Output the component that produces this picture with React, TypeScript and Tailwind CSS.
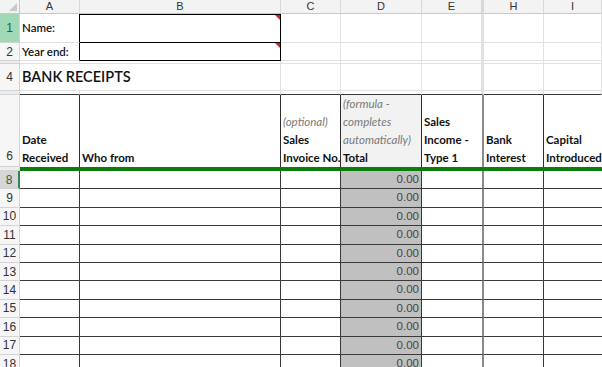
import React from 'react';

// Bank receipts worksheet: Excel-style grid with frozen header and row numbers
const COLS = ['A', 'B', 'C', 'D', 'E', 'H', 'I'];
const DATA_ROWS = [8, 9, 10, 11, 12, 13, 14, 15, 16, 17, 18];

const cellFont = "font-['Lato','Noto_Sans',sans-serif]";
const numFont = "font-['Liberation_Sans',Arial,sans-serif]";

function RowHead({ n, className = '' }: { n?: number | string; className?: string }) {
  return (
    <div
      className={`flex items-center justify-center border-r border-b border-[#d4d4d4] bg-[#f6f6f6] text-[12px] text-[#333] ${numFont} ${className}`}
    >
      {n}
    </div>
  );
}

function Grey({ className = '', children }: { className?: string; children?: React.ReactNode }) {
  return <div className={`relative border-r border-b border-[#e1e1e1] bg-white ${className}`}>{children}</div>;
}

function Comment() {
  return (
    <span className="absolute top-0 right-0 h-0 w-0 border-t-[5px] border-l-[5px] border-t-[#e0201b] border-l-transparent" />
  );
}

function HeadCell({ children, className = '' }: { children?: React.ReactNode; className?: string }) {
  return (
    <div
      className={`flex flex-col justify-end border-r border-[#2f2f2f] pl-[2px] text-[11.5px] font-bold leading-[18px] text-[#111] ${cellFont} ${className}`}
    >
      {children}
    </div>
  );
}

function Note({ children }: { children: React.ReactNode }) {
  return <span className="font-normal italic text-[#7a7a7a]">{children}</span>;
}

export default function App() {
  return (
    <div className="h-[367px] w-[602px] overflow-hidden bg-white">
      <div className="grid grid-cols-[20px_60px_201px_60px_81px_62px_60px_58px] grid-rows-[14px_29px_18px_3px_27px_4px_72px_4px_repeat(11,18.4px)]">
        {/* column letters */}
        <div className="relative border-r border-b border-[#c8c8c8] bg-[#f3f3f3]">
          <span className="absolute right-[2px] bottom-[2px] h-0 w-0 border-b-[8px] border-l-[8px] border-b-[#c9c9c9] border-l-transparent" />
        </div>
        {COLS.map((c) => (
          <div
            key={c}
            className={`flex items-center justify-center border-b border-[#c8c8c8] bg-[#f3f3f3] text-[11px] text-[#333] ${numFont} ${
              c === 'E' ? 'border-r-[3px] border-r-[#d8d8d8]' : 'border-r border-r-[#d8d8d8]'
            }`}
          >
            {c}
          </div>
        ))}

        {/* row 1 */}
        <RowHead n={1} className="!bg-[#a0d8b8] !text-[#0e6b3a]" />
        <Grey className={`flex items-center pl-[2px] text-[11.5px] font-semibold text-[#111] !border-r-black ${cellFont}`}>Name:</Grey>
        <Grey className="!border-b-black border-t border-t-black !border-r-black">
          <Comment />
        </Grey>
        <Grey />
        <Grey />
        <Grey className="!border-r-[3px]" />
        <Grey />
        <Grey />

        {/* row 2 */}
        <RowHead n={2} />
        <Grey className={`flex items-center pl-[2px] text-[11.5px] font-semibold text-[#111] !border-r-black ${cellFont}`}>Year end:</Grey>
        <Grey className="!border-b-black !border-r-black">
          <Comment />
        </Grey>
        <Grey />
        <Grey />
        <Grey className="!border-r-[3px]" />
        <Grey />
        <Grey />

        {/* row 3 (hidden) */}
        <RowHead className="!bg-[#ededed]" />
        {COLS.map((c) => (
          <Grey key={c} className={c === 'E' ? '!border-r-[3px]' : ''} />
        ))}

        {/* row 4 */}
        <RowHead n={4} />
        <div className={`col-span-2 flex items-center border-r border-b border-[#e1e1e1] pl-[2px] text-[14.5px] font-semibold text-[#111] ${cellFont}`}>
          BANK RECEIPTS
        </div>
        <Grey />
        <Grey />
        <Grey className="!border-r-[3px]" />
        <Grey />
        <Grey />

        {/* row 5 (hidden) */}
        <RowHead className="!bg-[#ededed]" />
        {COLS.map((c) => (
          <div key={c} className={`border-b border-b-[#3a3a3a] bg-white ${c === 'E' ? 'border-r-[3px] border-r-[#e1e1e1]' : 'border-r border-r-[#e1e1e1]'}`} />
        ))}

        {/* row 6: column headings */}
        <RowHead n={6} className="!justify-center !items-end pb-[1px]" />
        <HeadCell>
          <span>Date</span>
          <span>Received</span>
        </HeadCell>
        <HeadCell>
          <span>Who from</span>
        </HeadCell>
        <HeadCell>
          <Note>(optional)</Note>
          <span>Sales</span>
          <span className="whitespace-nowrap">Invoice No.</span>
        </HeadCell>
        <HeadCell className="bg-[#f2f2f2]">
          <Note>(formula -</Note>
          <Note>completes</Note>
          <Note>automatically)</Note>
          <span>Total</span>
        </HeadCell>
        <HeadCell className="!border-r-[2px] !border-r-[#8a8a8a]">
          <span>Sales</span>
          <span>Income -</span>
          <span>Type 1</span>
        </HeadCell>
        <HeadCell>
          <span>Bank</span>
          <span>Interest</span>
        </HeadCell>
        <HeadCell className="whitespace-nowrap !border-r-0">
          <span>Capital</span>
          <span>Introduced</span>
        </HeadCell>

        {/* row 7: green rule */}
        <RowHead className="!bg-[#ededed]" />
        <div className="col-span-7 bg-[#0b7d0b]" />

        {/* rows 8-18 */}
        {DATA_ROWS.map((r) => (
          <React.Fragment key={r}>
            <RowHead
              n={r}
              className={r === 8 ? '!bg-[#d6d6d6] !text-[#1d6b43] !border-r-2 !border-r-[#2f8a52]' : ''}
            />
            {COLS.map((c) => (
              <div
                key={c}
                className={`border-b border-[#3a3a3a] ${
                  c === 'E'
                    ? 'border-r-[2px] border-r-[#8a8a8a]'
                    : c === 'I'
                    ? ''
                    : 'border-r'
                } ${
                  c === 'D'
                    ? `flex items-center justify-end bg-[#c0c0c0] pr-[2px] text-[11.5px] text-[#444] ${numFont}`
                    : 'bg-white'
                }`}
              >
                {c === 'D' ? '0.00' : null}
              </div>
            ))}
          </React.Fragment>
        ))}
      </div>
    </div>
  );
}
